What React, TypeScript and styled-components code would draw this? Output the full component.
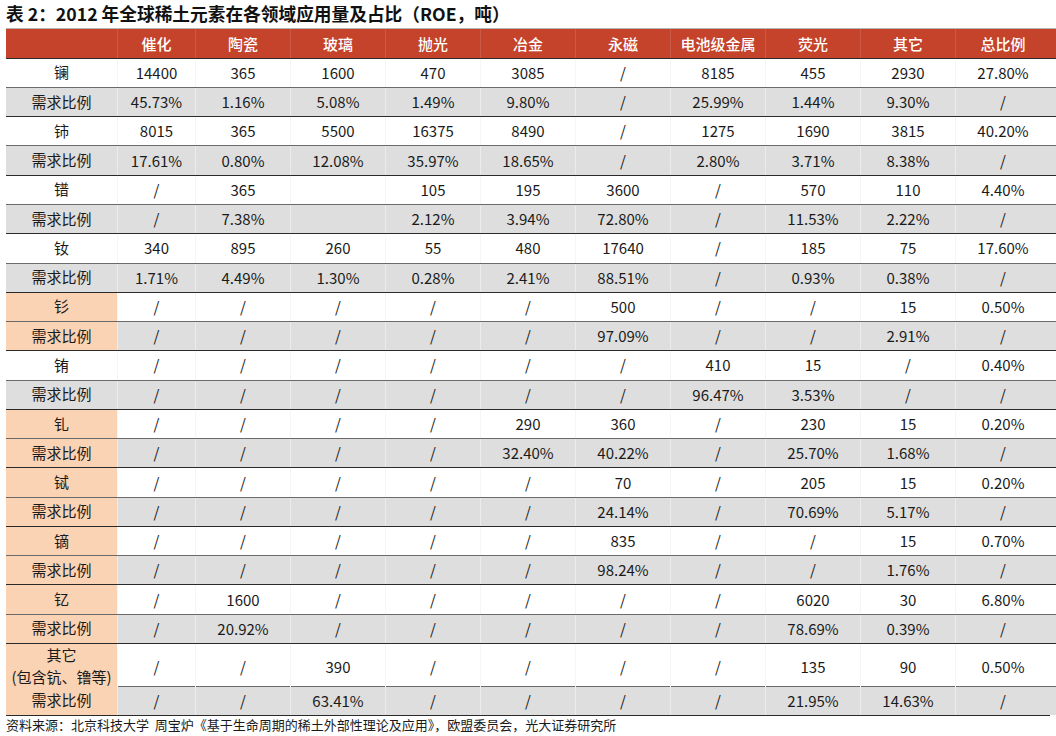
import React from "react";
import styled, { createGlobalStyle } from "styled-components";

const Global = createGlobalStyle`
  html, body { margin: 0; padding: 0; background: #ffffff; }
  body { font-family: "Noto Sans CJK SC", "Noto Sans", sans-serif; color: #1a1a1a; }
`;

const Page = styled.div`
  width: 1056px;
  padding-left: 6px;
  box-sizing: border-box;
`;

const Title = styled.div`
  height: 28px;
  line-height: 27px;
  font-size: 17.7px;
  font-weight: 700;
  color: #111;
  white-space: nowrap;
`;

const COLS = "111px 78px repeat(9, 95px)";

const HeadRow = styled.div`
  display: grid;
  grid-template-columns: ${COLS};
  height: 29.7px;
  background: #c4432a;
  border-top: 1px solid #b5b5b5;
  box-sizing: border-box;
`;

const HeadCell = styled.div`
  display: flex;
  align-items: center;
  justify-content: center;
  color: #ffffff;
  font-size: 15px;
  font-weight: 500;
  & + & { border-left: 1px solid rgba(255, 255, 255, 0.12); }
`;

const Row = styled.div<{ $gray?: boolean; $tall?: boolean }>`
  display: grid;
  grid-template-columns: ${COLS};
  height: ${(p) => (p.$tall ? "42.7px" : "29.28px")};
  background: ${(p) => (p.$gray ? "#dedede" : "#ffffff")};
  border-top: 1px solid ${(p) => (p.$gray ? "#6a6a6a" : "#2a2a2a")};
  box-sizing: border-box;
`;

const Cell = styled.div<{ $gray?: boolean }>`
  display: flex;
  align-items: center;
  justify-content: center;
  padding-bottom: 1px;
  font-size: 15px;
  color: #1a1a1a;
  white-space: nowrap;
  border-left: 1px solid ${(p) => (p.$gray ? "#ececec" : "#f6f6f6")};
`;

const LabelCell = styled.div<{ $orange?: boolean }>`
  display: flex;
  flex-direction: column;
  align-items: center;
  justify-content: center;
  padding-bottom: 1px;
  font-size: 15px;
  line-height: 22px;
  color: #1a1a1a;
  white-space: nowrap;
  background: ${(p) => (p.$orange ? "#fad3b4" : "transparent")};
`;

const BottomLine = styled.div`
  width: 1044px;
  border-top: 1px solid #2a2a2a;
`;

const Footer = styled.div`
  height: 20px;
  line-height: 17px;
  font-size: 13px;
  color: #1a1a1a;
  white-space: pre;
`;

const headers = ["催化", "陶瓷", "玻璃", "抛光", "冶金", "永磁", "电池级金属", "荧光", "其它", "总比例"];

type R = { label: React.ReactNode; vals: string[]; orange?: boolean; tall?: boolean };

const R2 = "需求比例";

const rows: R[][] = [
  [
    { label: "镧", vals: ["14400", "365", "1600", "470", "3085", "/", "8185", "455", "2930", "27.80%"] },
    { label: R2, vals: ["45.73%", "1.16%", "5.08%", "1.49%", "9.80%", "/", "25.99%", "1.44%", "9.30%", "/"] },
  ],
  [
    { label: "铈", vals: ["8015", "365", "5500", "16375", "8490", "/", "1275", "1690", "3815", "40.20%"] },
    { label: R2, vals: ["17.61%", "0.80%", "12.08%", "35.97%", "18.65%", "/", "2.80%", "3.71%", "8.38%", "/"] },
  ],
  [
    { label: "镨", vals: ["/", "365", "", "105", "195", "3600", "/", "570", "110", "4.40%"] },
    { label: R2, vals: ["/", "7.38%", "", "2.12%", "3.94%", "72.80%", "/", "11.53%", "2.22%", "/"] },
  ],
  [
    { label: "钕", vals: ["340", "895", "260", "55", "480", "17640", "/", "185", "75", "17.60%"] },
    { label: R2, vals: ["1.71%", "4.49%", "1.30%", "0.28%", "2.41%", "88.51%", "/", "0.93%", "0.38%", "/"] },
  ],
  [
    { label: "钐", orange: true, vals: ["/", "/", "/", "/", "/", "500", "/", "/", "15", "0.50%"] },
    { label: R2, orange: true, vals: ["/", "/", "/", "/", "/", "97.09%", "/", "/", "2.91%", "/"] },
  ],
  [
    { label: "铕", vals: ["/", "/", "/", "/", "/", "/", "410", "15", "/", "0.40%"] },
    { label: R2, vals: ["/", "/", "/", "/", "/", "/", "96.47%", "3.53%", "/", "/"] },
  ],
  [
    { label: "钆", orange: true, vals: ["/", "/", "/", "/", "290", "360", "/", "230", "15", "0.20%"] },
    { label: R2, orange: true, vals: ["/", "/", "/", "/", "32.40%", "40.22%", "/", "25.70%", "1.68%", "/"] },
  ],
  [
    { label: "铽", orange: true, vals: ["/", "/", "/", "/", "/", "70", "/", "205", "15", "0.20%"] },
    { label: R2, orange: true, vals: ["/", "/", "/", "/", "/", "24.14%", "/", "70.69%", "5.17%", "/"] },
  ],
  [
    { label: "镝", orange: true, vals: ["/", "/", "/", "/", "/", "835", "/", "/", "15", "0.70%"] },
    { label: R2, orange: true, vals: ["/", "/", "/", "/", "/", "98.24%", "/", "/", "1.76%", "/"] },
  ],
  [
    { label: "钇", orange: true, vals: ["/", "1600", "/", "/", "/", "/", "/", "6020", "30", "6.80%"] },
    { label: R2, orange: true, vals: ["/", "20.92%", "/", "/", "/", "/", "/", "78.69%", "0.39%", "/"] },
  ],
  [
    {
      label: (
        <>
          <span>其它</span>
          <span>(包含钪、镥等)</span>
        </>
      ),
      orange: true,
      tall: true,
      vals: ["/", "/", "390", "/", "/", "/", "/", "135", "90", "0.50%"],
    },
    { label: R2, orange: true, vals: ["/", "/", "63.41%", "/", "/", "/", "/", "21.95%", "14.63%", "/"] },
  ],
];

export default function App() {
  return (
    <Page>
      <Global />
      <Title>表 2：2012 年全球稀土元素在各领域应用量及占比（ROE，吨）</Title>
      <HeadRow>
        <HeadCell />
        {headers.map((h) => (
          <HeadCell key={h}>{h}</HeadCell>
        ))}
      </HeadRow>
      {rows.flat().map((r, i) => {
        const gray = i % 2 === 1;
        return (
          <Row key={i} $gray={gray} $tall={r.tall}>
            <LabelCell $orange={r.orange}>{r.label}</LabelCell>
            {r.vals.map((v, j) => (
              <Cell key={j} $gray={gray}>
                {v}
              </Cell>
            ))}
          </Row>
        );
      })}
      <BottomLine />
      <Footer>资料来源：北京科技大学  周宝炉《基于生命周期的稀土外部性理论及应用》，欧盟委员会，光大证券研究所</Footer>
    </Page>
  );
}
